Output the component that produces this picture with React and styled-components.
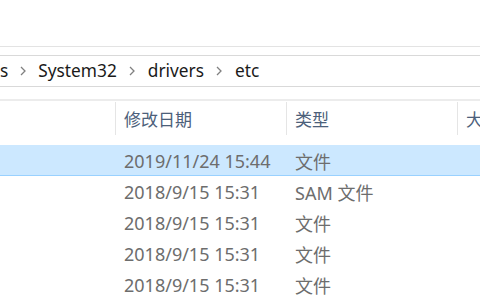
import React from "react";
import styled, { createGlobalStyle } from "styled-components";

const Global = createGlobalStyle`
    html, body {
        margin: 0;
        padding: 0;
        background: #ffffff;
        overflow: hidden;
    }
    body {
        font-family: "Noto Sans", "Noto Sans CJK SC", sans-serif;
    }
`

const Window = styled.div`
    width: 480px;
    height: 300px;
    overflow: hidden;
    display: flex;
    flex-direction: column;
    background: #ffffff;
`

const Ribbon = styled.div`
    height: 47px;
    border-bottom: 1px solid #e3e3e3;
`

const AddressRow = styled.div`
    margin-top: 8px;
    height: 30px;
    border-top: 1px solid #d9d9d9;
    border-bottom: 1px solid #d9d9d9;
    display: flex;
    align-items: center;
    font-size: 17.3px;
    color: #1a1a1a;
    white-space: nowrap;
`

const Crumb = styled.span`
    line-height: 30px;
`

const Chevron = styled.span`
    display: flex;
    align-items: center;
    justify-content: center;
    width: ${p => p.$w}px;
`

const Header = styled.div`
    margin-top: 12px;
    border-top: 2px solid #ececec;
    height: 37px;
    box-sizing: border-box;
    padding-top: 1px;
    display: flex;
    font-size: 17px;
    color: #4c607a;
    white-space: nowrap;
`

const HeadCell = styled.div`
    width: ${p => p.$w}px;
    flex: none;
    display: flex;
    align-items: center;
    padding-left: 8px;
    box-sizing: border-box;
    border-right: ${p => (p.$last ? "none" : "1px solid #e5e5e5")};
`

const List = styled.div`
    margin-top: 10px;
    display: flex;
    flex-direction: column;
`

const Row = styled.div`
    height: 31px;
    box-sizing: border-box;
    padding-top: 2px;
    display: flex;
    align-items: center;
    font-size: 18px;
    color: #6d6d6d;
    white-space: nowrap;
    background: ${p => (p.$selected ? "#cce8ff" : "transparent")};
    border-bottom: 1px solid ${p => (p.$selected ? "#99d1ff" : "transparent")};
`

const Cell = styled.div`
    width: ${p => p.$w}px;
    flex: none;
    padding-left: 8px;
    box-sizing: border-box;
`

const cols = [116, 171, 171, 40];

const rows = [
    { date: "2019/11/24 15:44", type: "文件", selected: true },
    { date: "2018/9/15 15:31", type: "SAM 文件" },
    { date: "2018/9/15 15:31", type: "文件" },
    { date: "2018/9/15 15:31", type: "文件" },
    { date: "2018/9/15 15:31", type: "文件" },
];

const Arrow = () => (
    <svg width="6" height="10" viewBox="0 0 6 10">
        <path d="M1 1 L5 5 L1 9" fill="none" stroke="#808080" strokeWidth="1.3" />
    </svg>
)

const App = () => {
    return (
        <Window>
            <Global />
            <Ribbon />
            <AddressRow>
                <Crumb>s</Crumb>
                <Chevron $w={30}><Arrow /></Chevron>
                <Crumb>System32</Crumb>
                <Chevron $w={31}><Arrow /></Chevron>
                <Crumb>drivers</Crumb>
                <Chevron $w={31}><Arrow /></Chevron>
                <Crumb>etc</Crumb>
            </AddressRow>
            <Header>
                <HeadCell $w={cols[0]} />
                <HeadCell $w={cols[1]}>修改日期</HeadCell>
                <HeadCell $w={cols[2]}>类型</HeadCell>
                <HeadCell $w={cols[3]} $last>大</HeadCell>
            </Header>
            <List>
                {rows.map((r, i) => (
                    <Row key={i} $selected={r.selected}>
                        <Cell $w={cols[0]} />
                        <Cell $w={cols[1]}>{r.date}</Cell>
                        <Cell $w={cols[2]}>{r.type}</Cell>
                    </Row>
                ))}
            </List>
        </Window>
    )
}

export default App;
